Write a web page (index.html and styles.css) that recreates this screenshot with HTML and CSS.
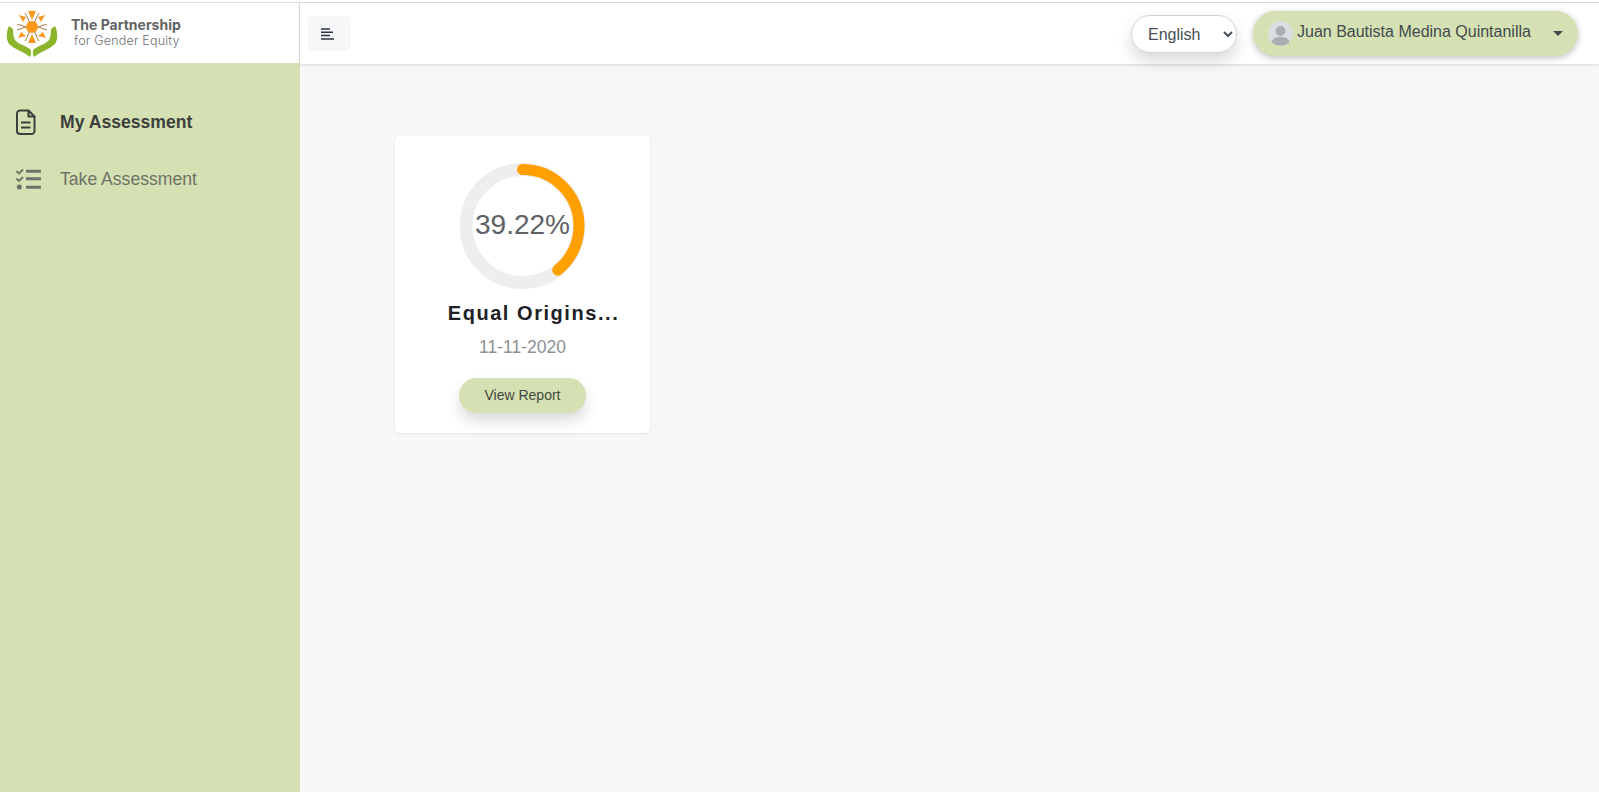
FILE: index.html
```html
<!DOCTYPE html>
<html lang="en">
<head>
<meta charset="utf-8">
<title>My Assessment</title>
<link rel="stylesheet" href="styles.css">
</head>
<body>
<header class="topbar">
  <div class="brand">
    <svg class="logo" width="52" height="48" viewBox="0 0 52 48">
      <g stroke="#a9743a" stroke-width="1" fill="none">
        <path d="M26 17c-3-1-6 1-9-1s-5-1-6-1M26 17c-3 0-6-1-9 1s-5 1-6 2M26 17c3-1 6 1 9-1s5-1 6-1M26 17c3 0 6-1 9 1s5 1 6 2"/>
        <path d="M26 17c-1-3-3-5-4-8s-2-4-3-6M26 17c1-3 3-5 4-8s2-4 3-6M26 17c-1 3-3 5-4 8s-2 4-3 6M26 17c1 3 3 5 4 8s2 4 3 6"/>
      </g>
      <g fill="#f7981d">
        <circle cx="26" cy="17" r="6"/>
        <path d="M22 1h8l-4 9zM22 33h8l-4-9zM13 5l7 2-3 5zM39 5l-7 2 3 5zM12 28l3-6 5 4zM40 28l-3-6-5 4z"/>
      </g>
      <g fill="#8cb52d">
        <path d="M3 16C0 22 0 30 3 34C8 39 18 42 24 47C26 43 25 40 24 39C20 36 15 35 11 32C7 29 7 22 7 19z"/>
        <path d="M49 16C52 22 52 30 49 34C44 39 34 42 28 47C26 43 27 40 28 39C32 36 37 35 41 32C45 29 45 22 45 19z"/>
      </g>
    </svg>
    <div class="brand-text">
      <span class="brand-name">The Partnership</span>
      <span class="brand-sub">for Gender Equity</span>
    </div>
  </div>
  <div class="bar">
    <button class="toggle" type="button" aria-label="Toggle menu">
      <svg class="toggle-icon" width="13" height="12" viewBox="0 0 13 12"><path d="M0 1h9M0 4.300h12M0 7.600h9M0 11h13" stroke="#2f3545" stroke-width="1.500"/></svg>
    </button>
    <div class="bar-right">
      <select class="lang"><option>English</option></select>
      <div class="user">
        <svg class="avatar" width="25" height="25" viewBox="0 0 25 25">
          <circle cx="12.500" cy="12.500" r="12.500" fill="#dcdee0"/>
          <circle cx="12.500" cy="10" r="5" fill="#a9aeb3"/>
          <path d="M3.500 21c1-4 5-5 9-5s8 1 9 5a12.500 12.500 0 0 1-18 0z" fill="#a9aeb3"/>
        </svg>
        <span class="user-name">Juan Bautista Medina Quintanilla</span>
        <span class="caret"></span>
      </div>
    </div>
  </div>
</header>
<div class="layout">
  <nav class="sidebar">
    <a class="nav-item active" href="#">
      <svg class="nav-icon" width="20" height="26" viewBox="0 0 20 26" fill="none" stroke="#3d3f3c" stroke-width="2">
        <path d="M4 1.500h8.500l6 6v14.500a3 3 0 0 1-3 3H4a3 3 0 0 1-3-3V4.500a3 3 0 0 1 3-3z"/>
        <path d="M12.500 1.500v6h6M5 13.500h9.500M5 18.500h9.500"/>
      </svg>
      <span>My Assessment</span>
    </a>
    <a class="nav-item" href="#">
      <svg class="nav-icon" width="26" height="22" viewBox="0 0 26 22" fill="none" stroke="#6e7268">
        <path d="M1.500 3l2.500 2.500 4-4M1.500 10.500l2.500 2.500 4-4" stroke-width="1.800"/>
        <circle cx="4.300" cy="19" r="2.500" fill="#6e7268" stroke="none"/>
        <path d="M11 3.200h15M11 10.800h15M11 19.200h15" stroke-width="3"/>
      </svg>
      <span>Take Assessment</span>
    </a>
  </nav>
  <main class="content">
    <article class="card">
      <div class="ring">
        <svg width="126" height="126" viewBox="0 0 126 126">
          <circle cx="62.500" cy="63" r="56.500" fill="none" stroke="#eeeeee" stroke-width="13"/>
          <circle cx="62.500" cy="63" r="56.500" fill="none" stroke="#ff9f00" stroke-width="11" stroke-linecap="round" stroke-dasharray="139.200 355" transform="rotate(-90 62.500 63)"/>
        </svg>
        <span class="ring-label">39.22%</span>
      </div>
      <h2 class="card-title">Equal Origins...</h2>
      <p class="card-date">11-11-2020</p>
      <a class="report" href="#">View Report</a>
    </article>
  </main>
</div>
</body>
</html>
```
FILE: styles.css
```css
* { box-sizing: border-box; }
html, body { height: 100%; }
body {
  margin: 0;
  padding-top: 2px;
  background: #fff;
  font-family: "Liberation Sans", Arial, sans-serif;
  color: #3f4045;
  overflow: hidden;
}
.topbar {
  display: flex;
  height: 62px;
  border-top: 1px solid #dedede;
  background: #fff;
}
.brand {
  width: 300px;
  flex: none;
  display: flex;
  align-items: center;
  padding-left: 6px;
  border-right: 1px solid #dedede;
}
.logo { flex: none; margin-right: 13px; }
.brand-text { display: flex; flex-direction: column; margin-top: -2px; }
.brand-name { font-family: "Inter", sans-serif; font-weight: 700; font-size: 14px; line-height: 17px; color: #626365; }
.brand-sub { font-family: "Inter", sans-serif; font-weight: 300; font-size: 12.500px; line-height: 16px; color: #6f7073; margin-left: 3px; letter-spacing: .2px; }
.bar {
  flex: 1;
  display: flex;
  align-items: center;
  justify-content: space-between;
  padding: 0 21px 0 8px;
  box-shadow: 0 1px 3px rgba(0,0,0,.12);
  position: relative;
  z-index: 1;
}
.toggle {
  width: 43px;
  height: 35px;
  padding: 0;
  border: 0;
  border-radius: 4px;
  background: #f6f7f9;
  display: flex;
  align-items: center;
  justify-content: center;
}
.toggle-icon { margin-right: 4px; }
.bar-right { display: flex; align-items: center; gap: 16px; margin-top: -1px; }
.lang {
  width: 106px;
  height: 38px;
  margin-top: 2px;
  padding: 0 0 0 12px;
  border: 1px solid #ced4da;
  border-radius: 19px;
  background: #fff;
  color: #495057;
  font: 16px "Liberation Sans", Arial, sans-serif;
  box-shadow: 0 8px 16px rgba(0,0,0,.15);
}
.user {
  width: 325px;
  height: 45px;
  display: flex;
  align-items: center;
  padding: 0 15px;
  border-radius: 23px;
  background: #d5e1b2;
  box-shadow: 0 2px 7px rgba(0,0,0,.25);
  font-size: 16px;
  color: #434a4f;
}
.avatar { flex: none; }
.user-name { margin: -3px 0 0 4px; flex: 1; white-space: nowrap; }
.caret { width: 0; height: 0; border: 5px solid transparent; border-top-color: #434a4f; border-bottom: 0; }
.layout { display: flex; height: 728px; }
.sidebar {
  width: 300px;
  flex: none;
  margin-top: -1px;
  padding-top: 31px;
  background: #d5e1b2;
}
.nav-item {
  display: flex;
  align-items: center;
  height: 57px;
  padding-left: 15px;
  font-size: 17.600px;
  color: #6e7268;
  text-decoration: none;
}
.nav-item.active { font-weight: 700; color: #3d3f3c; }
.nav-icon { flex: none; margin: -2px 19px 0 0; }
.nav-item.active .nav-icon { margin-left: 1px; margin-right: 24px; }
.content { flex: 1; padding: 72px 0 0 95px; background: #f7f7f7; }
.card {
  width: 255px;
  height: 297px;
  padding-top: 27px;
  display: flex;
  flex-direction: column;
  align-items: center;
  border-radius: 5px;
  background: #fff;
  box-shadow: 0 1px 3px rgba(0,0,0,.08);
}
.ring { position: relative; width: 126px; height: 126px; flex: none; }
.ring svg { display: block; }
.ring-label {
  position: absolute;
  inset: -2px 0 0;
  display: flex;
  align-items: center;
  justify-content: center;
  font-size: 28px;
  color: #606165;
}
.card-title { margin: 12px 0 0 22px; font-size: 20px; line-height: 24px; font-weight: 700; letter-spacing: 1.550px; color: #212226; }
.card-date { margin: 11px 0 0; font-size: 17.500px; line-height: 22px; color: #8c9197; }
.report {
  margin-top: 20px;
  width: 127px;
  height: 35px;
  padding-bottom: 2px;
  display: flex;
  align-items: center;
  justify-content: center;
  border-radius: 18px;
  background: #d5e1b2;
  color: #44473f;
  font-size: 14px;
  text-decoration: none;
  box-shadow: 0 8px 14px rgba(0,0,0,.14);
}
```
